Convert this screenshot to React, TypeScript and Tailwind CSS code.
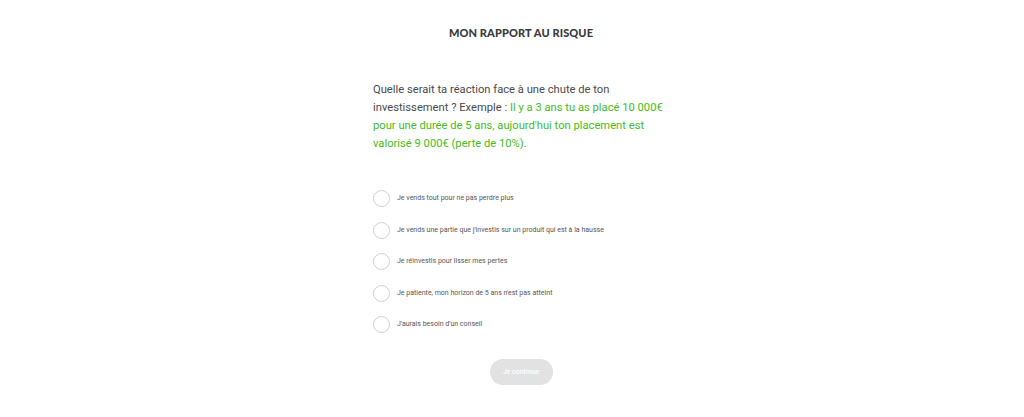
const options = [
  "Je vends tout pour ne pas perdre plus",
  "Je vends une partie que j'investis sur un produit qui est à la hausse",
  "Je réinvestis pour lisser mes pertes",
  "Je patiente, mon horizon de 5 ans n'est pas atteint",
  "J'aurais besoin d'un conseil",
];

export default function App() {
  return (
    <div className="min-h-screen bg-white flex justify-center pl-[18px]" style={{ fontFamily: "Roboto, 'Liberation Sans', sans-serif" }}>
      <div className="w-[296px] flex flex-col">
        <h1
          className="mt-[26px] text-center text-[11px] leading-[14px] font-black uppercase tracking-[0.01em] text-[#3a3a3a]"
          style={{ fontFamily: "Lato, 'DejaVu Sans', sans-serif" }}
        >
          Mon rapport au risque
        </h1>

        <p className="mt-[41px] text-[11.2px] leading-[18px] text-[#4a4a4a]">
          Quelle serait ta réaction face à une chute de ton investissement ? Exemple :{" "}
          <span className="text-[#44bb22]">
            Il y a 3 ans tu as placé 10{"\u00a0"}000€ pour une durée de 5 ans, aujourd'hui ton placement est valorisé 9{"\u00a0"}000€ (perte de 10%).
          </span>
        </p>

        <div className="mt-[37px] flex flex-col gap-[14.5px]">
          {options.map((o) => (
            <label key={o} className="flex items-center gap-[7px] cursor-pointer">
              <span className="w-[17px] h-[17px] rounded-full border border-[#d0d0d0] bg-white shrink-0" />
              <span className="text-[7px] leading-[17px] text-[#555]">{o}</span>
            </label>
          ))}
        </div>

        <div className="mt-[26px] flex justify-center">
          <button className="w-[63px] h-[26px] rounded-full bg-[#e2e2e2] text-white text-[7px] font-medium">
            Je continue
          </button>
        </div>
      </div>
    </div>
  );
}
